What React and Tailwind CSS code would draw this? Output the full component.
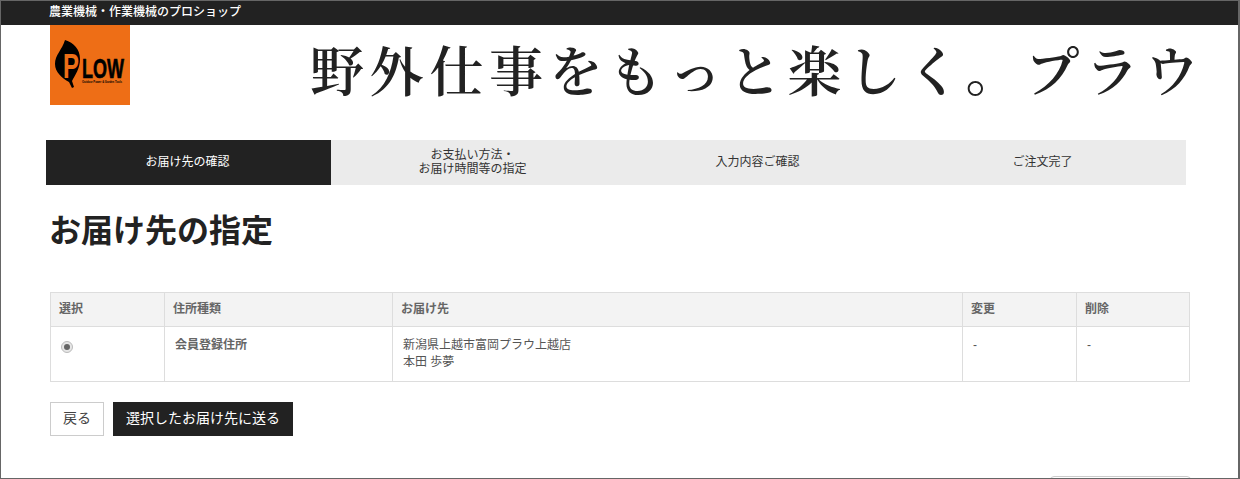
import React from "react"

const SANS = "font-['Liberation_Sans','Noto_Sans_CJK_JP',sans-serif]"

const steps = [
  { label: ["お届け先の確認"], active: true },
  { label: ["お支払い方法・", "お届け時間等の指定"] },
  { label: ["入力内容ご確認"] },
  { label: ["ご注文完了"] },
]

const Logo = () => (
  <div className="w-20 h-20 bg-[#ee6e16] shrink-0">
    <svg width="80" height="80" viewBox="0 0 80 80">
      <path d="M15 15 C24 18 30 24 30 34 C30 44 25 50 22 56 L24 62 L22 63 L19 57 C12 53 5 47 5 39 C5 30 12 25 15 15 Z" fill="#000" />
      <text transform="translate(13 53) scale(1 1.46)" fontFamily="Liberation Sans" fontWeight="700" fontSize="24" fill="#ee6e16">P</text>
      <text transform="translate(32 53) scale(1 1.55)" fontFamily="Liberation Sans" fontWeight="700" fontSize="18" fill="#000" stroke="#000" strokeWidth="0.4">LOW</text>
      <text x="32" y="58" fontFamily="Liberation Sans" fontWeight="700" fontSize="2.7" fill="#000">Outdoor Power & Garden Tools</text>
    </svg>
  </div>
)

const App = () => {
  return (
    <div className={`h-[479px] overflow-hidden bg-white border border-[#666] border-r-2 text-[#333] ${SANS}`}>
      <div className="h-6 bg-[#222] pl-[48px] text-xs leading-[23px] font-medium text-white">
        農業機械・作業機械のプロショップ
      </div>

      <div className="flex h-20 pl-[49px]">
        <Logo />
        <div className="ml-[180px] pt-[9px] text-[54px] leading-[70px] tracking-[5.7px] whitespace-nowrap font-semibold text-[#222] font-['Noto_Serif_CJK_JP','Liberation_Serif','Noto_Sans_CJK_JP',serif]">
          野外仕事をもっと楽しく。プラウ
        </div>
      </div>

      <div className="flex h-[45px] mt-[35px] ml-[45px] w-[1140px] bg-[#ebebeb] text-xs leading-[14px]">
        {steps.map((step) => (
          <div
            key={step.label[0]}
            className={`w-[285px] pr-[2px] pb-[1px] flex flex-col items-center justify-center ${step.active ? "bg-[#222] text-white" : "text-[#333]"}`}
          >
            {step.label.map((line) => (
              <span key={line}>{line}</span>
            ))}
          </div>
        ))}
      </div>

      <h1 className="mt-[26px] ml-[48px] text-[32px] leading-[40px] font-bold text-[#222]">お届け先の指定</h1>

      <div className="mt-[41px] ml-[49px] w-[1140px] border border-[#ddd] text-xs text-[#555]">
        <div className="grid grid-cols-[114px_228px_570px_114px_1fr] h-[34px] bg-[#f3f3f3] border-b border-[#ddd] font-bold text-[#666] leading-[33px]">
          <div className="pl-2 border-r border-[#ddd]">選択</div>
          <div className="pl-2 border-r border-[#ddd]">住所種類</div>
          <div className="pl-2 border-r border-[#ddd]">お届け先</div>
          <div className="pl-2 border-r border-[#ddd]">変更</div>
          <div className="pl-2">削除</div>
        </div>
        <div className="grid grid-cols-[114px_228px_570px_114px_1fr] h-[54px] leading-[17px]">
          <div className="pl-[10px] pt-[14px] border-r border-[#ddd]">
            <span className="flex items-center justify-center w-3 h-3 rounded-full bg-[#e6e6e6] border border-[#bbb]">
              <span className="w-[6px] h-[6px] rounded-full bg-[#666]" />
            </span>
          </div>
          <div className="pl-[10px] pt-[10px] font-bold text-[#666] border-r border-[#ddd]">会員登録住所</div>
          <div className="pl-[10px] pt-[10px] border-r border-[#ddd]">
            <p>新潟県上越市富岡プラウ上越店</p>
            <p>本田 歩夢</p>
          </div>
          <div className="pl-[10px] pt-[10px] border-r border-[#ddd]">-</div>
          <div className="pl-[10px] pt-[10px]">-</div>
        </div>
      </div>

      <div className="flex gap-[9px] mt-5 ml-[49px] text-sm">
        <button className="w-[54px] h-[34px] pb-[2px] bg-white border border-[#ccc] text-[#444]">戻る</button>
        <button className="w-[180px] h-[34px] pb-[2px] bg-[#222] text-white">選択したお届け先に送る</button>
      </div>

      <div className="mt-[40px] ml-[1049px] w-[141px] h-6 border border-[#ccc] rounded-t-sm" />
    </div>
  )
}

export default App
